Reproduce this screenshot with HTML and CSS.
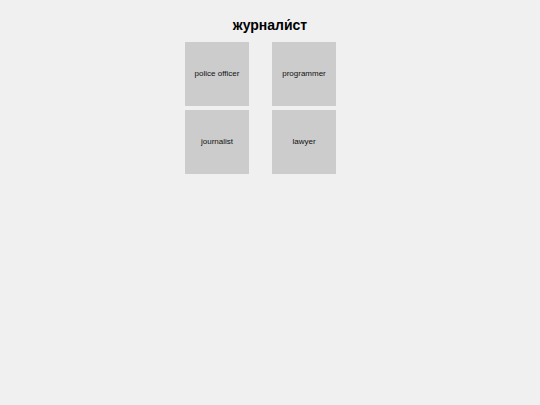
FILE: index.html
```html
<!DOCTYPE html>
<html>
<head>
<meta charset="utf-8">
<link rel="stylesheet" href="styles.css">
</head>
<body>
<div class="page">
  <h1 class="title">журнали́ст</h1>
  <div class="grid-wrap">
    <div class="grid">
      <div class="cell">police officer</div>
      <div class="cell">programmer</div>
      <div class="cell">journalist</div>
      <div class="cell">lawyer</div>
    </div>
  </div>
</div>
</body>
</html>
```

FILE: styles.css
```css
html, body {
  margin: 0;
  padding: 0;
  background: #f0f0f0;
}
body {
  width: 540px;
  height: 405px;
  font-family: "Liberation Sans", Arial, sans-serif;
  color: #000;
}
.page {
  display: flex;
  flex-direction: column;
  align-items: center;
  padding-top: 16px;
}
.title {
  margin: 0;
  font-size: 14px;
  font-weight: bold;
  line-height: 18px;
  height: 18px;
}
.grid-wrap {
  margin-top: 8px;
  padding-right: 19px;
}
.grid {
  display: grid;
  grid-template-columns: 64px 64px;
  column-gap: 23px;
  row-gap: 4px;
}
.cell {
  width: 64px;
  height: 64px;
  box-sizing: border-box;
  padding-bottom: 2px;
  background: #cccccc;
  display: flex;
  align-items: center;
  justify-content: center;
  font-size: 8px;
  color: #111;
  text-align: center;
}
```
